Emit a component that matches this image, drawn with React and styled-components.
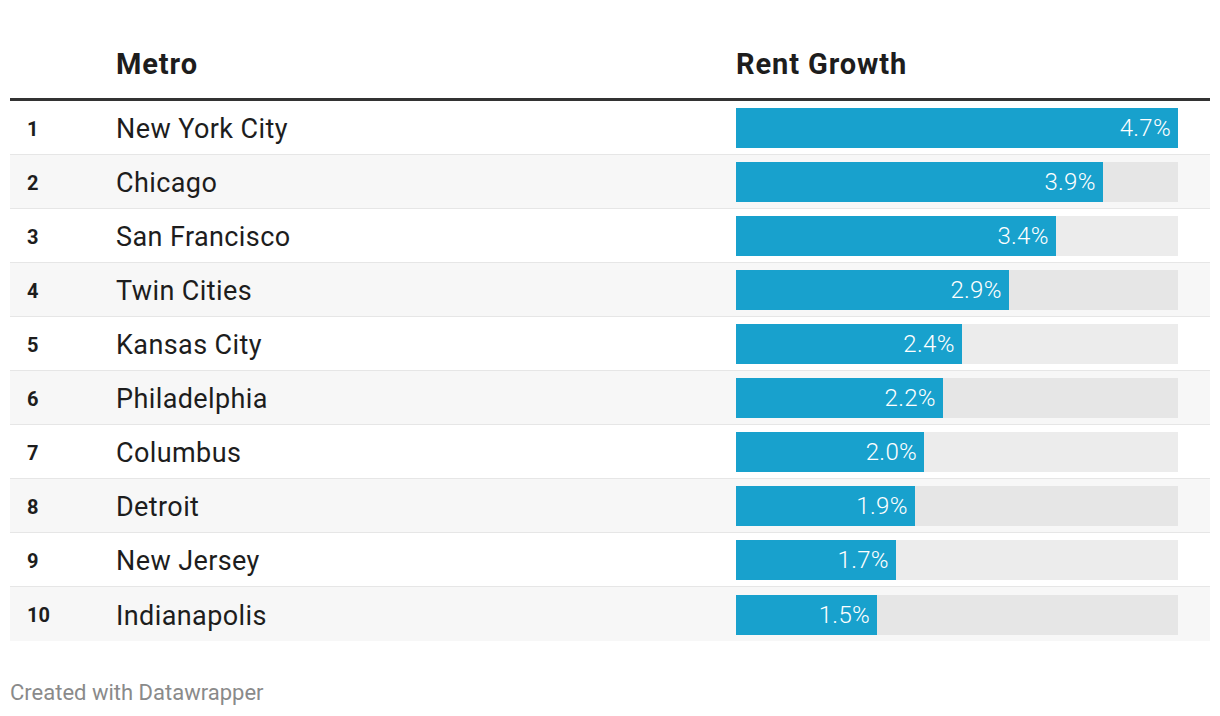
import React from "react";
import styled, { createGlobalStyle } from "styled-components";

const GlobalStyle = createGlobalStyle`
  html, body {
    margin: 0;
    padding: 0;
    background: #fff;
  }
  body {
    font-family: Roboto, "Liberation Sans", sans-serif;
    color: #1d1d1d;
  }
`;

const MAX = 4.7;

const rows = [
  { rank: 1, metro: "New York City", value: 4.7 },
  { rank: 2, metro: "Chicago", value: 3.9 },
  { rank: 3, metro: "San Francisco", value: 3.4 },
  { rank: 4, metro: "Twin Cities", value: 2.9 },
  { rank: 5, metro: "Kansas City", value: 2.4 },
  { rank: 6, metro: "Philadelphia", value: 2.2 },
  { rank: 7, metro: "Columbus", value: 2.0 },
  { rank: 8, metro: "Detroit", value: 1.9 },
  { rank: 9, metro: "New Jersey", value: 1.7 },
  { rank: 10, metro: "Indianapolis", value: 1.5 },
];

const Page = styled.div`
  padding: 0 10px;
`;

const Table = styled.div`
  display: flex;
  flex-direction: column;
`;

const HeadRow = styled.div`
  display: grid;
  grid-template-columns: 106px 620px 1fr;
  align-items: end;
  border-bottom: 3px solid #333;
  box-sizing: border-box;
  height: 101px;
  padding-bottom: 19px;
`;

const HeadCell = styled.div`
  font-size: 29px;
  line-height: 30px;
  font-weight: 700;
  letter-spacing: 0.9px;
  color: #1d1d1d;
`;

const Row = styled.div`
  display: grid;
  grid-template-columns: 106px 620px 1fr;
  align-items: center;
  height: 54px;
  box-sizing: border-box;
  padding-right: 32px;
  background: ${(p) => (p.$striped ? "#f7f7f7" : "#fff")};
  border-bottom: ${(p) => (p.$last ? "none" : "1px solid #e6e6e6")};
`;

const Rank = styled.div`
  font-size: 20px;
  font-weight: 700;
  padding-left: 17px;
  padding-top: 2px;
  color: #1d1d1d;
`;

const Metro = styled.div`
  font-size: 27px;
  letter-spacing: 0.4px;
  padding-top: 3px;
  color: #1d1d1d;
`;

const Track = styled.div`
  height: 40px;
  margin-top: 1px;
  background: ${(p) => (p.$striped ? "#e6e6e6" : "#ececec")};
  display: flex;
`;

const Bar = styled.div`
  height: 100%;
  background: #18a1cd;
  color: #fff;
  font-size: 24px;
  font-weight: 300;
  letter-spacing: 0.3px;
  display: flex;
  align-items: center;
  justify-content: flex-end;
  padding-right: 7px;
  box-sizing: border-box;
`;

const Footer = styled.div`
  margin-top: 39px;
  font-size: 22px;
  color: #8a8a8a;
`;

export default function App() {
  return (
    <Page>
      <GlobalStyle />
      <Table>
        <HeadRow>
          <HeadCell />
          <HeadCell>Metro</HeadCell>
          <HeadCell>Rent Growth</HeadCell>
        </HeadRow>
        {rows.map((r, i) => (
          <Row key={r.rank} $striped={i % 2 === 1} $last={i === rows.length - 1}>
            <Rank>{r.rank}</Rank>
            <Metro>{r.metro}</Metro>
            <Track $striped={i % 2 === 1}>
              <Bar style={{ width: `${(r.value / MAX) * 100}%` }}>
                {r.value.toFixed(1)}%
              </Bar>
            </Track>
          </Row>
        ))}
      </Table>
      <Footer>Created with Datawrapper</Footer>
    </Page>
  );
}
